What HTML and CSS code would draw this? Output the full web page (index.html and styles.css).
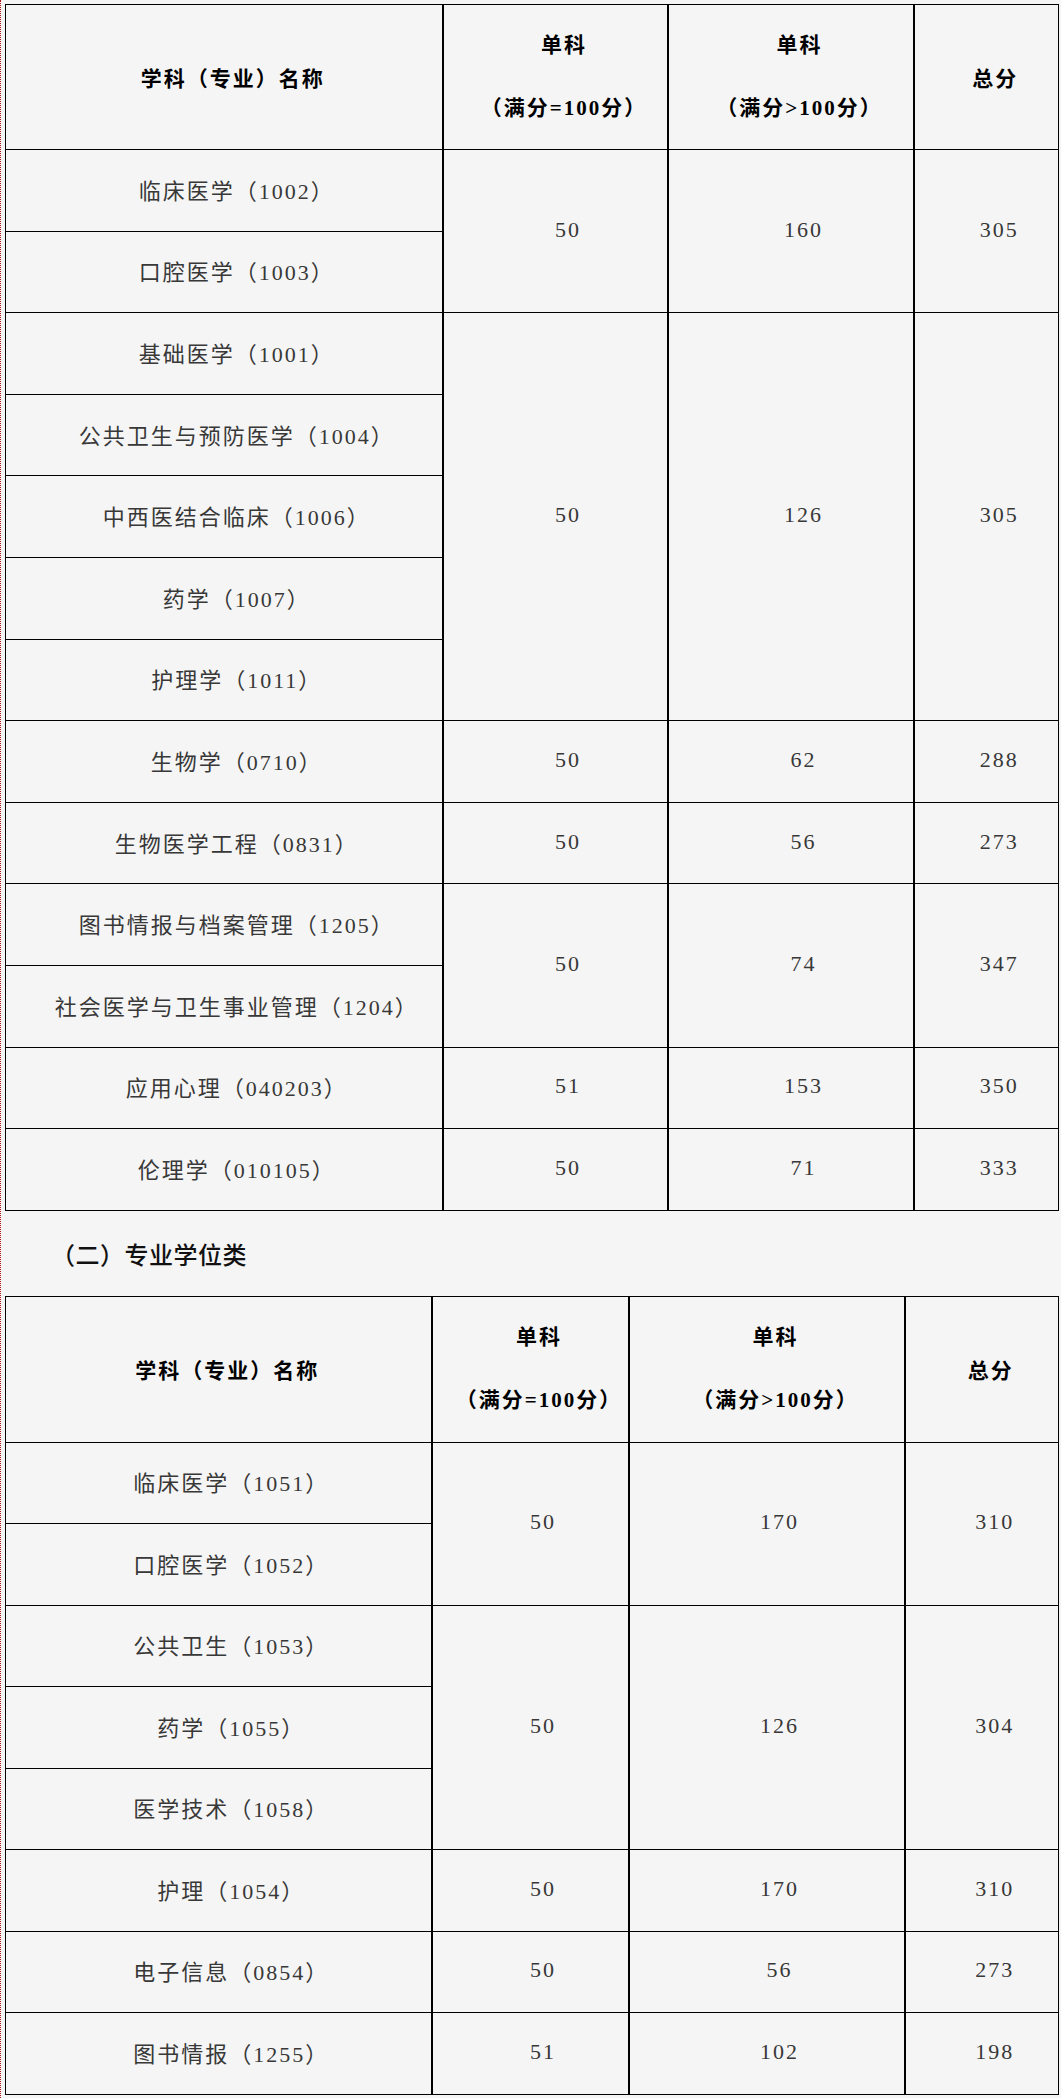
FILE: index.html
```html
<!DOCTYPE html>
<html lang="zh-CN">
<head>
<meta charset="utf-8">
<title>复试分数线</title>
<link rel="stylesheet" href="styles.css">
</head>
<body>
<div class="page">
  <table class="score-table t1">
    <colgroup>
      <col class="c-name"><col class="c-a"><col class="c-b"><col class="c-c">
    </colgroup>
    <tr class="head">
      <th>学科（专业）名称</th>
      <th><div class="hl">单科</div><div class="hl">（满分=100分）</div></th>
      <th><div class="hl">单科</div><div class="hl">（满分&gt;100分）</div></th>
      <th>总分</th>
    </tr>
    <tr><td class="name">临床医学（1002）</td><td class="num" rowspan="2">50</td><td class="num" rowspan="2">160</td><td class="num" rowspan="2">305</td></tr>
    <tr><td class="name">口腔医学（1003）</td></tr>
    <tr><td class="name">基础医学（1001）</td><td class="num" rowspan="5">50</td><td class="num" rowspan="5">126</td><td class="num" rowspan="5">305</td></tr>
    <tr><td class="name">公共卫生与预防医学（1004）</td></tr>
    <tr><td class="name">中西医结合临床（1006）</td></tr>
    <tr><td class="name">药学（1007）</td></tr>
    <tr><td class="name">护理学（1011）</td></tr>
    <tr><td class="name">生物学（0710）</td><td class="num">50</td><td class="num">62</td><td class="num">288</td></tr>
    <tr><td class="name">生物医学工程（0831）</td><td class="num">50</td><td class="num">56</td><td class="num">273</td></tr>
    <tr><td class="name">图书情报与档案管理（1205）</td><td class="num" rowspan="2">50</td><td class="num" rowspan="2">74</td><td class="num" rowspan="2">347</td></tr>
    <tr><td class="name">社会医学与卫生事业管理（1204）</td></tr>
    <tr><td class="name">应用心理（040203）</td><td class="num">51</td><td class="num">153</td><td class="num">350</td></tr>
    <tr><td class="name">伦理学（010105）</td><td class="num">50</td><td class="num">71</td><td class="num">333</td></tr>
  </table>

  <div class="section-title">（二）专业学位类</div>

  <table class="score-table t2">
    <colgroup>
      <col class="c-name"><col class="c-a"><col class="c-b"><col class="c-c">
    </colgroup>
    <tr class="head">
      <th>学科（专业）名称</th>
      <th><div class="hl">单科</div><div class="hl">（满分=100分）</div></th>
      <th><div class="hl">单科</div><div class="hl">（满分&gt;100分）</div></th>
      <th>总分</th>
    </tr>
    <tr><td class="name">临床医学（1051）</td><td class="num" rowspan="2">50</td><td class="num" rowspan="2">170</td><td class="num" rowspan="2">310</td></tr>
    <tr><td class="name">口腔医学（1052）</td></tr>
    <tr><td class="name">公共卫生（1053）</td><td class="num" rowspan="3">50</td><td class="num" rowspan="3">126</td><td class="num" rowspan="3">304</td></tr>
    <tr><td class="name">药学（1055）</td></tr>
    <tr><td class="name">医学技术（1058）</td></tr>
    <tr><td class="name">护理（1054）</td><td class="num">50</td><td class="num">170</td><td class="num">310</td></tr>
    <tr><td class="name">电子信息（0854）</td><td class="num">50</td><td class="num">56</td><td class="num">273</td></tr>
    <tr><td class="name">图书情报（1255）</td><td class="num">51</td><td class="num">102</td><td class="num">198</td></tr>
  </table>
</div>
</body>
</html>
```

FILE: styles.css
```css
html, body {
  margin: 0;
  padding: 0;
  background: #f5f5f5;
}

.page {
  box-sizing: border-box;
  min-height: 2098px;
  border-left: 1px dotted #b01010;
  padding: 4px 0 0 4px;
  width: 1061px;
}

.score-table {
  border-collapse: collapse;
  table-layout: fixed;
  width: 1053px;
  font-family: "Liberation Serif", "Noto Sans CJK SC", serif;
  color: #383838;
}

.score-table th,
.score-table td {
  border: 1px solid #000;
  padding: 0 0 3px 26px;
  text-align: center;
  vertical-align: middle;
}

.score-table th + th,
.score-table td + td {
  border-left-width: 2px;
}

.score-table td.num {
  border-left-width: 2px;
}

.t1 .c-name { width: 437px; }
.t1 .c-a { width: 225px; }
.t1 .c-b { width: 246px; }
.t1 .c-c { width: 145px; }

.t2 .c-name { width: 426px; }
.t2 .c-a { width: 197px; }
.t2 .c-b { width: 276px; }
.t2 .c-c { width: 154px; }

.head th {
  font-family: "Liberation Serif", "Noto Sans CJK SC", serif;
  font-weight: 700;
  font-size: 21px;
  letter-spacing: 2px;
  color: #000;
  padding-left: 18px;
  padding-bottom: 0;
}

.t1 .head th { height: 144px; }
.t2 .head th { height: 145px; }

.hl {
  line-height: 63px;
}

.score-table td {
  font-size: 22px;
  letter-spacing: 2px;
  font-weight: 400;
}

.t1 td { height: 77.6px; }
.t2 td { height: 77.5px; }

.section-title {
  height: 85px;
  line-height: 85px;
  padding-left: 46px;
  font-family: "Noto Sans CJK SC", sans-serif;
  font-size: 24px;
  letter-spacing: 0.5px;
  font-weight: 500;
  color: #111;
}
```
